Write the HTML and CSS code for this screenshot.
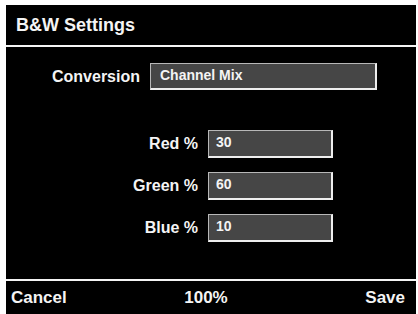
FILE: index.html
```html
<!DOCTYPE html>
<html lang="en">
<head>
  <meta charset="UTF-8">
  <meta name="viewport" content="width=device-width, initial-scale=1.0">
  <title>B&amp;W Settings</title>
  <link rel="stylesheet" href="styles.css">
</head>
<body>
  <div class="panel">
    <div class="title">B&amp;W Settings</div>
    <div class="content">
      <div class="row conversion">
        <label>Conversion</label>
        <div class="field wide">Channel Mix</div>
      </div>
      <div class="mix">
        <div class="row">
          <label>Red %</label>
          <div class="field">30</div>
        </div>
        <div class="row">
          <label>Green %</label>
          <div class="field">60</div>
        </div>
        <div class="row">
          <label>Blue %</label>
          <div class="field">10</div>
        </div>
      </div>
    </div>
    <div class="footer">
      <span>Cancel</span>
      <span class="zoom">100%</span>
      <span class="save">Save</span>
    </div>
  </div>
</body>
</html>
```

FILE: styles.css
```css
html, body {
  margin: 0;
  height: 100%;
}
body {
  font-family: 'Liberation Sans', Arial, sans-serif;
  font-weight: bold;
  background: #fff;
  color: #f4f4f4;
  padding: 5px 2px 0 6px;
  box-sizing: border-box;
  overflow: hidden;
}
.panel {
  background: #000;
  height: 309px;
  display: flex;
  flex-direction: column;
}
.title {
  height: 40px;
  line-height: 40px;
  padding-left: 10px;
  font-size: 18px;
  border-bottom: 2px solid #f4f4f4;
}
.content {
  flex: 1;
  padding-top: 16px;
}
.row {
  display: flex;
  align-items: center;
  gap: 10px;
}
.row label {
  width: 192px;
  text-align: right;
  font-size: 16px;
}
.conversion label {
  width: 134px;
}
.field {
  box-sizing: border-box;
  width: 125px;
  height: 28px;
  padding: 0 0 3px 7px;
  background: #464646;
  border-style: solid;
  border-width: 1px 2px 2px 1px;
  border-color: #b8b8b8 #eeeeee #eeeeee #b8b8b8;
  font-size: 14px;
  display: flex;
  align-items: center;
}
.field.wide {
  width: 227px;
  height: 27px;
  padding-left: 9px;
}
.mix {
  margin-top: 40px;
  display: flex;
  flex-direction: column;
  gap: 14px;
}
.footer {
  height: 33px;
  border-top: 2px solid #f4f4f4;
  display: grid;
  grid-template-columns: 1fr auto 1fr;
  align-items: center;
  padding: 0 11px 0 5px;
  font-size: 17px;
}
.zoom {
  margin-right: 4px;
}
.save {
  text-align: right;
}
```
